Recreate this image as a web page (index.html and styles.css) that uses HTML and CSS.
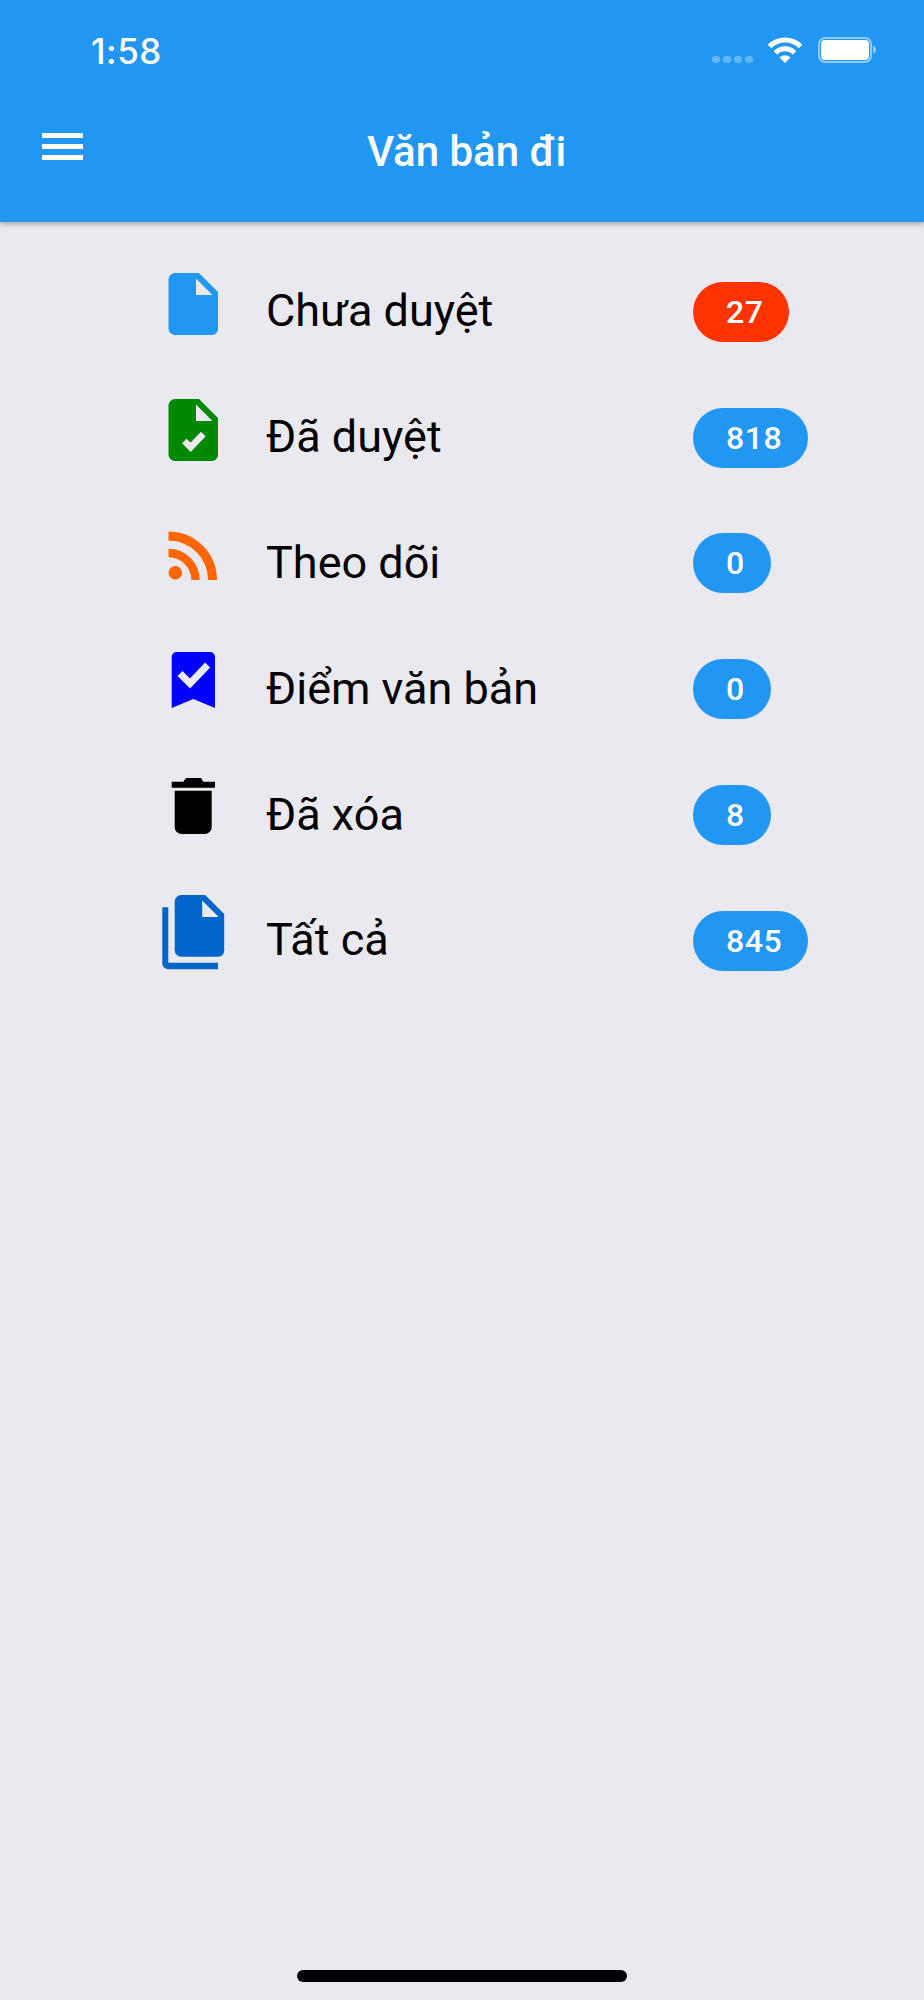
FILE: index.html
```html
<!DOCTYPE html>
<html>
<head>
    <title>Văn bản đi</title>
    <link rel="stylesheet" href="styles.css">
</head>
<body>
    <div class="header">
        <div class="status-bar">
            <span class="time">1:58</span>
            <div class="status-icons">
                <div class="signal"><i></i><i></i><i></i><i></i></div>
                <svg class="wifi" width="36" height="26" viewBox="0 0 36 26">
                    <path d="M2.5 9.5A22 22 0 0 1 33.5 9.5M8.5 16A13 13 0 0 1 27.5 16" fill="none" stroke="#fff" stroke-width="5"/>
                    <path d="M18 26L12.5 20.5A8 8 0 0 1 23.5 20.5Z" fill="#fff"/>
                </svg>
                <div class="battery"><div class="battery-level"></div></div>
            </div>
        </div>
        <div class="title-bar">
            <div class="menu"><i></i><i></i><i></i></div>
            <div class="title">Văn bản đi</div>
        </div>
    </div>

    <div class="list">
        <div class="row">
            <svg class="icon" width="66" height="100" viewBox="0 0 66 100">
                <path d="M15 10H39L58 29V66A6 6 0 0 1 52 72H15A6.500 6.500 0 0 1 8.500 65.500V16.500A6.500 6.500 0 0 1 15 10Z" fill="#2196f3"/>
                <path d="M36 15.500V32H52.500Z" fill="#e9e9ef"/>
            </svg>
            <span class="label">Chưa duyệt</span>
            <span class="badge badge-red">27</span>
        </div>
        <div class="row">
            <svg class="icon" width="66" height="100" viewBox="0 0 66 100">
                <path d="M15 10H39L58 29V66A6 6 0 0 1 52 72H15A6.500 6.500 0 0 1 8.500 65.500V16.500A6.500 6.500 0 0 1 15 10Z" fill="#008800"/>
                <path d="M36 15.500V32H52.500Z" fill="#e9e9ef"/>
                <path d="M24.300 52L30.700 58.300L43.300 45" fill="none" stroke="#e9e9ef" stroke-width="6.500"/>
            </svg>
            <span class="label">Đã duyệt</span>
            <span class="badge">818</span>
        </div>
        <div class="row">
            <svg class="icon" width="66" height="100" viewBox="0 0 66 100">
                <circle cx="15.300" cy="58.700" r="6.800" fill="#ff6600"/>
                <path d="M8.500 22A44 44 0 0 1 52.500 66" fill="none" stroke="#ff6600" stroke-width="9"/>
                <path d="M8.500 39A27 27 0 0 1 35.500 66" fill="none" stroke="#ff6600" stroke-width="8.400"/>
            </svg>
            <span class="label">Theo dõi</span>
            <span class="badge">0</span>
        </div>
        <div class="row">
            <svg class="icon" width="66" height="100" viewBox="0 0 66 100">
                <path d="M16.700 12H50A5 5 0 0 1 55 17V68L33.300 59L11.700 68V17A5 5 0 0 1 16.700 12Z" fill="#0000ff"/>
                <path d="M20 33.500L30 43.500L47.700 25" fill="none" stroke="#e9e9ef" stroke-width="7"/>
            </svg>
            <span class="label">Điểm văn bản</span>
            <span class="badge">0</span>
        </div>
        <div class="row">
            <svg class="icon" width="66" height="100" viewBox="0 0 66 100">
                <path d="M11.700 15.700H23.300L26 12H41L43.300 15.700H55V21.700H11.700Z" fill="#000"/>
                <path d="M14.700 24.700H51.700V61A7 7 0 0 1 44.700 68H21.700A7 7 0 0 1 14.700 61Z" fill="#000"/>
            </svg>
            <span class="label">Đã xóa</span>
            <span class="badge">8</span>
        </div>
        <div class="row">
            <svg class="icon" width="66" height="100" viewBox="0 0 66 100">
                <path d="M2.300 15.300H8.300V70.700H58V77.300H8.300A6 6 0 0 1 2.300 71.300Z" fill="#0066cc"/>
                <path d="M21.200 3H45.200L64.200 22V58.700A6 6 0 0 1 58.200 64.700H21.200A6.500 6.500 0 0 1 14.700 58.200V9.500A6.500 6.500 0 0 1 21.200 3Z" fill="#0066cc"/>
                <path d="M42.200 8.500V25H58.700Z" fill="#e9e9ef"/>
            </svg>
            <span class="label">Tất cả</span>
            <span class="badge">845</span>
        </div>
    </div>

    <div class="home-indicator"></div>
</body>
</html>
```

FILE: styles.css
```css
body {
    margin: 0;
    min-height: 2000px;
    display: flex;
    flex-direction: column;
    background-color: #e9e9ef;
    font-family: Roboto, "Noto Sans", sans-serif;
    color: #000;
}
.header {
    height: 222px;
    background-color: #2196f3;
    box-shadow: 0 2px 5px rgba(0,0,0,0.3);
    color: white;
}
.status-bar {
    height: 100px;
    display: flex;
    justify-content: space-between;
    align-items: flex-start;
    padding: 0 52px 0 91px;
}
.time {
    font-family: Inter, Roboto, sans-serif;
    font-size: 35px;
    font-weight: 500;
    letter-spacing: 0.5px;
    line-height: 42px;
    margin-top: 30px;
}
.status-icons {
    display: flex;
    align-items: flex-start;
    margin-top: 37px;
}
.signal {
    display: flex;
    gap: 3px;
    margin-top: 19px;
    margin-right: 14px;
}
.signal i {
    width: 8px;
    height: 7px;
    border-radius: 3px;
    background-color: rgba(255,255,255,0.3);
}
.wifi {
    margin-right: 15px;
}
.battery {
    position: relative;
    width: 48px;
    height: 20px;
    padding: 1px;
    border: 2px solid rgba(255,255,255,0.5);
    border-radius: 7px;
}
.battery:after {
    content: "";
    position: absolute;
    right: -6px;
    top: 7px;
    width: 3px;
    height: 7px;
    border-radius: 0 3px 3px 0;
    background-color: rgba(255,255,255,0.5);
}
.battery-level {
    height: 100%;
    background-color: white;
    border-radius: 4px;
}
.title-bar {
    position: relative;
    height: 122px;
}
.menu {
    position: absolute;
    left: 42px;
    top: 33px;
    width: 41px;
    display: flex;
    flex-direction: column;
    gap: 6px;
}
.menu i {
    height: 5px;
    background-color: white;
}
.title {
    padding-left: 9px;
    text-align: center;
    font-size: 42px;
    font-weight: 500;
    line-height: 104px;
}
.list {
    padding: 27px 0 0 160px;
}
.row {
    height: 125.800px;
    display: flex;
    align-items: center;
}
.icon {
    flex: none;
    margin-top: 2px;
    margin-right: 41px;
}
.label {
    width: 426px;
    margin-left: -1px;
    margin-right: 1px;
    margin-bottom: 2px;
    font-size: 45px;
}
.badge {
    height: 60px;
    padding: 0 26px 0 33px;
    border-radius: 30px;
    background-color: #2196f3;
    color: white;
    font-size: 32px;
    font-weight: 500;
    letter-spacing: 0.5px;
    line-height: 60px;
}
.badge-red {
    background-color: #ff3300;
}
.home-indicator {
    width: 330px;
    height: 12px;
    margin: auto auto 18px;
    border-radius: 6px;
    background-color: #000;
}
```
